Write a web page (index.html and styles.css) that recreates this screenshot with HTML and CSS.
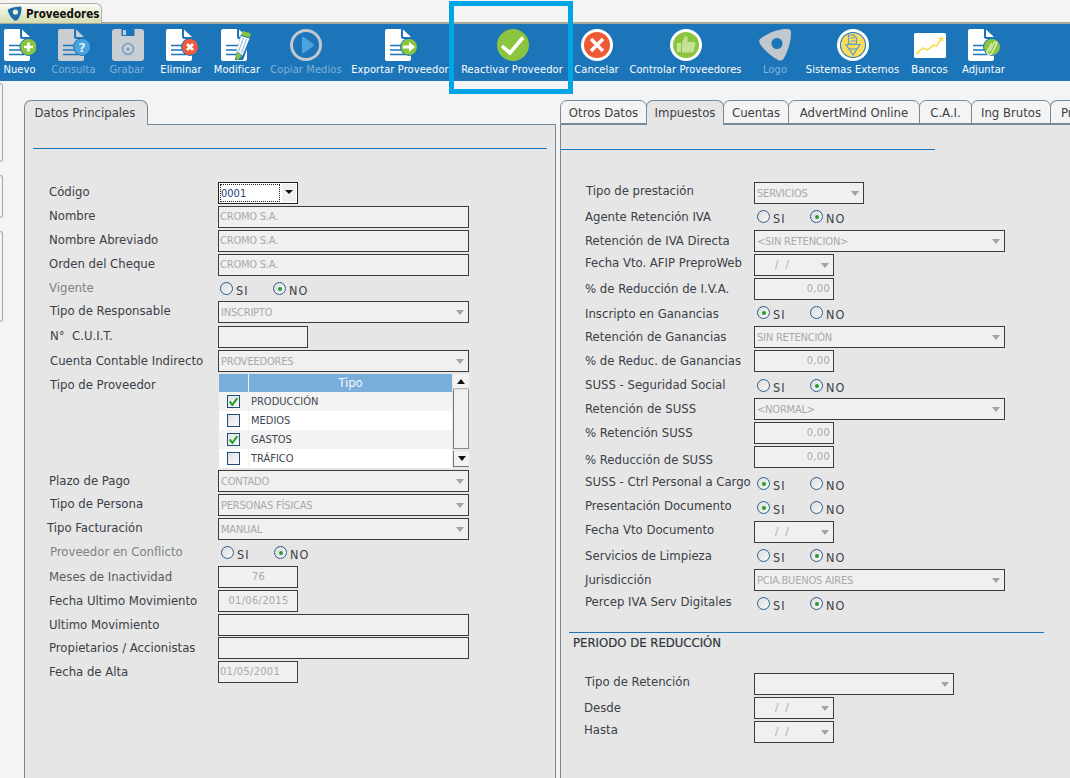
FILE: index.html
```html
<!DOCTYPE html>
<html lang="es">
<head>
<meta charset="utf-8">
<title>Proveedores</title>
<link rel="stylesheet" href="styles.css">
</head>
<body>
<svg class="defs" width="0" height="0" aria-hidden="true">
  <symbol id="page" viewBox="0 0 26 32">
    <path d="M2 0H16V8a2 2 0 0 0 2 2H26V30a2 2 0 0 1-2 2H2a2 2 0 0 1-2-2V2a2 2 0 0 1 2-2Z" fill="currentColor"/>
    <path d="M18 0.5L26 8H19a1 1 0 0 1-1-1Z" fill="currentColor"/>
    <path d="M5 16.5H20M5 21H18M5 25.500H20" stroke="#1c75b9" stroke-width="1.600" fill="none"/>
  </symbol>
</svg>
<div class="topbar">
  <div class="apptab">
    <svg class="applogo" viewBox="0 0 16 16"><path d="M1.500 3.500C5 1.500 10 .5 14 .5c1.500 0 1.500 1 1.500 2C15.500 7 14 12 11 15c-1 1-2 1-3 .4C5 13.500 2.500 9.500 1 5.500.7 4.500.7 4 1.500 3.500Z" fill="#1d6ea8"/><circle cx="9" cy="6.500" r="2.800" fill="#e8f0dc"/></svg>
    <span>Proveedores</span>
  </div>
</div>

<nav class="toolbar">
  <div class="tool t-nuevo">
    <svg class="ico" viewBox="0 0 32 32"><use href="#page" x="0" y="0" width="26" height="32" class="white"/><circle cx="24.500" cy="18" r="9" fill="#1c75b9"/><circle cx="24.500" cy="18" r="8" fill="#8bc53f"/><path d="M24.500 13.500v9M20 18h9" stroke="#fff" stroke-width="2.600"/></svg>
    <span>Nuevo</span>
  </div>
  <div class="tool off t-consulta">
    <svg class="ico" viewBox="0 0 32 32"><use href="#page" width="26" height="32" class="grey"/><circle cx="24" cy="18" r="9" fill="#1c75b9"/><circle cx="24" cy="18" r="8" fill="#4aa3df"/><text x="24" y="22.500" class="qm">?</text></svg>
    <span>Consulta</span>
  </div>
  <div class="tool off t-grabar nudge">
    <svg class="ico" viewBox="0 0 32 32"><path d="M3 0H29a3 3 0 0 1 3 3V29a3 3 0 0 1-3 3H3a3 3 0 0 1-3-3V3a3 3 0 0 1 3-3Z" fill="#c9ced3"/><path d="M9.500 0h13v7h-13Z" fill="#1c75b9"/><path d="M11 1h3v5h-3Z" fill="#c9ced3"/><path d="M5 11.500h22V32H5Z" fill="#c9ced3"/><circle cx="16" cy="20" r="5.500" fill="none" stroke="#6f9fc6" stroke-width="1.500"/><circle cx="16" cy="20" r="1.500" fill="#6f9fc6"/></svg>
    <span>Grabar</span>
  </div>
  <div class="tool t-eliminar nudge">
    <svg class="ico" viewBox="0 0 32 32"><use href="#page" width="26" height="32" class="white"/><circle cx="24" cy="18" r="9" fill="#1c75b9"/><circle cx="24" cy="18" r="8" fill="#ef5a3c"/><path d="M21 15l6 6M27 15l-6 6" stroke="#fff" stroke-width="2.600"/></svg>
    <span>Eliminar</span>
  </div>
  <div class="tool t-modificar">
    <svg class="ico" viewBox="0 0 32 32"><use href="#page" width="26" height="32" class="white"/><path d="M14 30L20 5 30.500 8 22 31l-8 0Z" fill="#1c75b9"/><path d="M21.500 2l8.500 2.500-1.300 4L20.300 6Z" fill="#8bc53f"/><path d="M20 7l8.500 2.500-7 17L15.500 22Z" fill="#fff"/><path d="M22.500 9l-5 13.500M25.500 10l-5 14" stroke="#9ac0de" stroke-width="1.200"/><path d="M15.500 22.500l5.500 4.500-6 5Z" fill="#8bc53f"/></svg>
    <span>Modificar</span>
  </div>
  <div class="tool off t-copiar">
    <svg class="ico" viewBox="0 0 32 32"><circle cx="16" cy="16" r="14.500" fill="none" stroke="#c2c8cd" stroke-width="3"/><path d="M12 8.500a1 1 0 0 1 1.500-.8L23.500 15a1.200 1.200 0 0 1 0 2L13.500 24.300a1 1 0 0 1-1.500-.8Z" fill="#4aa3df"/></svg>
    <span>Copiar Medios</span>
  </div>
  <div class="tool t-exportar nudge">
    <svg class="ico" viewBox="0 0 32 32"><use href="#page" width="26" height="32" class="white"/><circle cx="24" cy="18" r="9" fill="#1c75b9"/><circle cx="24" cy="18" r="8" fill="#8bc53f"/><path d="M18 16.500h6V13l6 5-6 5v-3.500h-6Z" fill="#fff"/></svg>
    <span>Exportar Proveedor</span>
  </div>
  <div class="tool t-reactivar nudge">
    <svg class="ico" viewBox="0 0 32 32"><circle cx="16" cy="16" r="16" fill="#8bc53f"/><path d="M5 17l8 7L26 8.500" fill="none" stroke="#fff" stroke-width="3.600"/></svg>
    <span>Reactivar Proveedor</span>
  </div>
  <div class="tool t-cancelar">
    <svg class="ico" viewBox="0 0 32 32"><circle cx="16" cy="16" r="16" fill="#fff"/><circle cx="16" cy="16" r="13" fill="#ef5a34"/><path d="M10 10l12 12M22 10L10 22" stroke="#fff" stroke-width="3.400"/></svg>
    <span>Cancelar</span>
  </div>
  <div class="tool t-controlar">
    <svg class="ico" viewBox="0 0 32 32"><circle cx="16" cy="16" r="16" fill="#fff"/><circle cx="16" cy="16" r="13" fill="#8bc53f"/><path d="M7 14h4v9H7ZM12 14l3-7c2.500 0 3 2 2.500 6H24c1 0 1.500 1 1.200 2l-1.500 7c-.2 1-1 1.500-2 1.500H12Z" fill="#c4e294"/></svg>
    <span>Controlar Proveedores</span>
  </div>
  <div class="tool off t-logo">
    <svg class="ico" viewBox="0 0 32 32"><path d="M1 10C10 3 20 0 28 0c3 0 4 1 4 4 0 8-3 18-7 25-2 3-4 3-6 2C12 27 5 21 1 15c-1-2-1-4 0-5Z" fill="#c2c8cd"/><circle cx="18" cy="14.500" r="5.500" fill="#1c75b9"/></svg>
    <span>Logo</span>
  </div>
  <div class="tool t-sistemas">
    <svg class="ico" viewBox="0 0 32 32"><circle cx="16" cy="16" r="16" fill="#fff"/><circle cx="16" cy="16" r="13" fill="#1c75b9"/><circle cx="16" cy="16" r="12" fill="#fbdc5b"/><path d="M11.500 6h5l3 3v6h-8ZM13.500 9h4M13.500 12h5" fill="none" stroke="#5a9fc8" stroke-width="1.200"/><path d="M9 15.500h14L16 26Z" fill="none" stroke="#5a9fc8" stroke-width="1.200"/><path d="M12 20h8" stroke="#5a9fc8" stroke-width="1.200"/></svg>
    <span>Sistemas Externos</span>
  </div>
  <div class="tool t-bancos">
    <svg class="ico" viewBox="0 0 32 32"><rect x="0" y="4" width="32" height="25" rx="1.500" fill="#fff"/><path d="M2.500 25l6-6 5 2 6-5 3 1 4.500-7" fill="none" stroke="#fbdc5b" stroke-width="1.800"/><path d="M24 9.500l5-2 .5 5.500Z" fill="#fbdc5b"/></svg>
    <span>Bancos</span>
  </div>
  <div class="tool t-adjuntar">
    <svg class="ico" viewBox="0 0 32 32"><use href="#page" width="26" height="32" class="white"/><circle cx="24" cy="18" r="9" fill="#1c75b9"/><circle cx="24" cy="18" r="8" fill="#8bc53f"/><path d="M21.500 22.500l4.500-8.500c1-2 3.500-.7 2.500 1.200l-4.700 9c-1.700 3-6 1-4.400-2l4.300-8" fill="none" stroke="#dff0c0" stroke-width="1.400"/></svg>
    <span>Adjuntar</span>
  </div>
</nav>

<div class="highlight"></div>

<main class="workspace">
  <div class="stubs">
    <div class="stub s1"></div>
    <div class="stub s2"></div>
    <div class="stub s3"></div>
  </div>

  <section class="pane pane-left">
    <div class="tabs">
      <div class="tab active w-datos">Datos Principales</div>
    </div>
    <div class="panel">
      <hr class="rule rule-left">
      <div class="form form-left">
        <div class="row">
          <label class="lbl p1">Código</label>
          <div class="combo"><span class="focus">0001</span><span class="dropbtn"></span></div>
        </div>
        <div class="row"><label class="lbl p1">Nombre</label><div class="field w251">CROMO S.A.</div></div>
        <div class="row"><label class="lbl p1">Nombre Abreviado</label><div class="field w251">CROMO S.A.</div></div>
        <div class="row"><label class="lbl p1">Orden del Cheque</label><div class="field w251">CROMO S.A.</div></div>
        <div class="row h23"><label class="lbl p1 dim">Vigente</label>
          <div class="radios r4 rx2"><span class="rad"><i></i>SI</span><span class="rad on"><i></i>NO</span></div></div>
        <div class="row h25"><label class="lbl p1 x1">Tipo de Responsable</label><div class="field sel w251">INSCRIPTO</div></div>
        <div class="row"><label class="lbl p1 x1">N°&nbsp; C.U.I.T.</label><div class="field w90"></div></div>
        <div class="row h23"><label class="lbl p2 x1">Cuenta Contable Indirecto</label><div class="field sel w251">PROVEEDORES</div></div>
        <div class="row h97"><label class="lbl p3 x1">Tipo de Proveedor</label>
          <div class="picker">
            <div class="grid">
              <div class="ghead"><span class="gc"></span><span class="gt">Tipo</span></div>
              <div class="grow"><span class="gc"><b class="chk on"><svg viewBox="0 0 10 10"><path d="M1.500 5l2.500 3 4.500-6" fill="none" stroke="#1fa02c" stroke-width="1.800"/></svg></b></span><span class="gv">PRODUCCIÓN</span></div>
              <div class="grow alt"><span class="gc"><b class="chk"></b></span><span class="gv">MEDIOS</span></div>
              <div class="grow"><span class="gc"><b class="chk on"><svg viewBox="0 0 10 10"><path d="M1.500 5l2.500 3 4.500-6" fill="none" stroke="#1fa02c" stroke-width="1.800"/></svg></b></span><span class="gv">GASTOS</span></div>
              <div class="grow alt"><span class="gc"><b class="chk"></b></span><span class="gv">TRÁFICO</span></div>
            </div>
            <div class="sbar"><span class="sbtn up"></span><span class="thumb"></span><span class="sbtn down"></span></div>
          </div>
        </div>
        <div class="row"><label class="lbl p2">Plazo de Pago</label><div class="field sel w251">CONTADO</div></div>
        <div class="row"><label class="lbl p1 x1">Tipo de Persona</label><div class="field sel w251">PERSONAS FÍSICAS</div></div>
        <div class="row"><label class="lbl p1 xm2">Tipo Facturación</label><div class="field sel w251">MANUAL</div></div>
        <div class="row"><label class="lbl p1 x1 dim">Proveedor en Conflicto</label>
          <div class="radios r4 rx3"><span class="rad"><i></i>SI</span><span class="rad on"><i></i>NO</span></div></div>
        <div class="row"><label class="lbl p2 mid">Meses de Inactividad</label><div class="field w80 center">76</div></div>
        <div class="row"><label class="lbl p2">Fecha Ultimo Movimiento</label><div class="field w80 center">01/06/2015</div></div>
        <div class="row h23"><label class="lbl p2">Ultimo Movimiento</label><div class="field w251"></div></div>
        <div class="row"><label class="lbl p2">Propietarios / Accionistas</label><div class="field w251"></div></div>
        <div class="row"><label class="lbl p2">Fecha de Alta</label><div class="field w80">01/05/2001</div></div>
      </div>
    </div>
  </section>

  <section class="pane pane-right">
    <div class="tabs">
      <div class="tab w-otros">Otros Datos</div>
      <div class="tab active w-imp">Impuestos</div>
      <div class="tab w-cuentas">Cuentas</div>
      <div class="tab w-advert">AdvertMind Online</div>
      <div class="tab w-cai">C.A.I.</div>
      <div class="tab w-ing">Ing Brutos</div>
      <div class="tab w-pr">Pr</div>
    </div>
    <div class="panel">
      <hr class="rule rule-right">
      <div class="form form-right">
        <div class="row"><label class="lbl p0 x1">Tipo de prestación</label><div class="field sel w110">SERVICIOS</div></div>
        <div class="row"><label class="lbl p2">Agente Retención IVA</label><div class="radios r4 rx3"><span class="rad"><i></i>SI</span><span class="rad on"><i></i>NO</span></div></div>
        <div class="row"><label class="lbl p2">Retención de IVA Directa</label><div class="field sel w251">&lt;SIN RETENCION&gt;</div></div>
        <div class="row"><label class="lbl p0">Fecha Vto. AFIP PreproWeb</label><div class="field sel w80 date">/&nbsp;&nbsp;/</div></div>
        <div class="row"><label class="lbl p2">% de Reducción de I.V.A.</label><div class="field w80 num">0,00</div></div>
        <div class="row"><label class="lbl p3">Inscripto en Ganancias</label><div class="radios r4 rx3"><span class="rad on"><i></i>SI</span><span class="rad"><i></i>NO</span></div></div>
        <div class="row"><label class="lbl p2">Retención de Ganancias</label><div class="field sel w251">SIN RETENCIÓN</div></div>
        <div class="row"><label class="lbl p2">% de Reduc. de Ganancias</label><div class="field w80 num">0,00</div></div>
        <div class="row"><label class="lbl p2">SUSS - Seguridad Social</label><div class="radios r5 rx3"><span class="rad"><i></i>SI</span><span class="rad on"><i></i>NO</span></div></div>
        <div class="row"><label class="lbl p2">Retención de SUSS</label><div class="field sel w251">&lt;NORMAL&gt;</div></div>
        <div class="row"><label class="lbl p2">% Retención SUSS</label><div class="field w80 num">0,00</div></div>
        <div class="row"><label class="lbl p5">% Reducción de SUSS</label><div class="field w80 num">0,00</div></div>
        <div class="row"><label class="lbl p3">SUSS - Ctrl Personal a Cargo</label><div class="radios r7 rx3"><span class="rad on"><i></i>SI</span><span class="rad"><i></i>NO</span></div></div>
        <div class="row h27"><label class="lbl p3">Presentación Documento</label><div class="radios r7 rx3"><span class="rad on"><i></i>SI</span><span class="rad"><i></i>NO</span></div></div>
        <div class="row"><label class="lbl p0">Fecha Vto Documento</label><div class="field sel w80 date">/&nbsp;&nbsp;/</div></div>
        <div class="row"><label class="lbl p2">Servicios de Limpieza</label><div class="radios r4 rx3"><span class="rad"><i></i>SI</span><span class="rad on"><i></i>NO</span></div></div>
        <div class="row"><label class="lbl p2">Jurisdicción</label><div class="field sel w251">PCIA.BUENOS AIRES</div></div>
        <div class="row"><label class="lbl p0">Percep IVA Serv Digitales</label><div class="radios r4 rx3"><span class="rad"><i></i>SI</span><span class="rad on"><i></i>NO</span></div></div>
      </div>
      <div class="section">
        <hr class="rule rule-section">
        <h2 class="section-title">PERIODO DE REDUCCIÓN</h2>
        <div class="form form-right form-section">
          <div class="row"><label class="lbl p0">Tipo de Retención</label><div class="field sel w200"></div></div>
          <div class="row"><label class="lbl p2 xm1">Desde</label><div class="field sel w80 date">/&nbsp;&nbsp;/</div></div>
          <div class="row"><label class="lbl p0 xm1">Hasta</label><div class="field sel w80 date">/&nbsp;&nbsp;/</div></div>
        </div>
      </div>
    </div>
  </section>
</main>
</body>
</html>
```
FILE: styles.css
```css
* { box-sizing: border-box; }
html, body { margin: 0; padding: 0; }
body {
  width: 1070px;
  height: 778px;
  overflow: hidden;
  position: relative;
  background: #f4f4f4;
  font-family: "DejaVu Sans Condensed", "DejaVu Sans", sans-serif;
  font-size: 13px;
  color: #33393f;
}
.defs { position: absolute; }
.white { color: #fff; }
.grey { color: #c9ced3; }

/* top bar */
.topbar {
  height: 24px;
  padding-top: 3px;
  border-bottom: 2px solid #a5a89a;
}
.apptab {
  width: 102px;
  height: 20px;
  display: flex;
  align-items: center;
  gap: 4px;
  padding-left: 7px;
  border: 1px solid #b0b0a8;
  border-bottom: 0;
  border-left: 0;
  border-radius: 0 6px 0 0;
  background: linear-gradient(#fbfbf6, #d4dcae);
  font-weight: bold;
  font-size: 11.500px;
  color: #111;
}
.applogo { width: 15px; height: 15px; flex: none; }

/* toolbar */
.toolbar {
  height: 57px;
  display: flex;
  align-items: flex-start;
  background: #1c75b9;
  color: #fff;
  padding-top: 5px;
  font-size: 11px;
  letter-spacing: 0.1px;
}
.tool {
  display: flex;
  flex-direction: column;
  align-items: center;
  flex: none;
}
.tool span {
  margin-top: 2px;
  line-height: 14px;
  white-space: nowrap;
}
.tool.off span { color: #7fb2d9; }
.ico { width: 32px; height: 32px; display: block; }
.nudge .ico { margin-left: 2px; }
.qm { font: bold 13px "DejaVu Sans", sans-serif; fill: #dcecf7; text-anchor: middle; }
.t-nuevo { width: 31px; margin-left: 4px; }
.t-consulta { width: 43px; margin-left: 17px; }
.t-grabar { width: 34px; margin-left: 15px; }
.t-eliminar { width: 38px; margin-left: 18px; }
.t-modificar { width: 46px; margin-left: 14px; }
.t-copiar { width: 70px; margin-left: 11px; }
.t-exportar { width: 98px; margin-left: 10px; }
.t-reactivar { width: 102px; margin-left: 12px; }
.t-cancelar { width: 43px; margin-left: 12px; }
.t-controlar { width: 113px; margin-left: 11px; }
.t-logo { width: 24px; margin-left: 21px; }
.t-sistemas { width: 91px; margin-left: 20px; }
.t-bancos { width: 35px; margin-left: 14px; }
.t-adjuntar { width: 43px; margin-left: 15px; }

/* highlight overlay */
.highlight {
  position: absolute;
  left: 449px;
  top: 1px;
  width: 124px;
  height: 93px;
  border: 5px solid #00a5e6;
}

/* workspace */
.workspace {
  display: flex;
  height: 697px;
}
.stubs {
  flex: 0 0 3px;
  display: flex;
  flex-direction: column;
  gap: 13px;
  padding-top: 2px;
}
.stub {
  border: 1px solid #a8a8a8;
  border-left: 0;
  border-radius: 0 3px 3px 0;
}
.s1 { height: 79px; }
.s2 { height: 43px; }
.s3 { height: 91px; }
.pane {
  padding-top: 19px;
  display: flex;
  flex-direction: column;
  min-width: 0;
}
.pane-left { width: 532px; margin-left: 21px; }
.pane-right { width: 510px; margin-left: 4px; }

/* tabs */
.tabs {
  display: flex;
  height: 25px;
  overflow: hidden;
  position: relative;
  z-index: 1;
  margin-bottom: -1px;
  flex: none;
}
.tab {
  flex: none;
  height: 24px;
  border: 1px solid #74899a;
  border-radius: 7px 7px 0 0;
  background: #f4f4f4;
  margin-right: -1px;
  text-align: center;
  line-height: 24px;
  white-space: nowrap;
  color: #3a4046;
  overflow: hidden;
}
.tab.active {
  height: 25px;
  background: #e6e6e6;
  border-bottom: 0;
}
.w-datos { width: 124px; padding-right: 2px; }
.w-otros { width: 87px; }
.w-imp { width: 78px; }
.w-cuentas { width: 66px; }
.w-advert { width: 132px; }
.w-cai { width: 53px; }
.w-ing { width: 80px; }
.w-pr { width: 20px; text-align: left; padding-left: 10px; border-right: 0; border-radius: 7px 0 0 0; }

.panel {
  flex: 1;
  background: #e6e6e6;
  border: 1px solid #74899a;
  border-bottom: 0;
}
.pane-right .panel { border-right: 0; }

.rule {
  border: 0;
  height: 1px;
  margin: 0;
  background: #1c75b9;
}
.rule-left { margin: 23px 8px 0 8px; }
.rule-right { margin: 24px 0 0 0; width: 374px; }

/* form */
.form-left { margin-top: 33px; padding-left: 24px; }
.form-right { margin-top: 32px; padding-left: 24px; }
.row {
  display: flex;
  height: 24px;
  align-items: flex-start;
}
.h23 { height: 23px; }
.h25 { height: 25px; }
.h27 { height: 27px; }
.h97 { height: 97px; }
.lbl {
  flex: 0 0 169px;
  line-height: 17px;
  white-space: nowrap;
  color: #3a4046;
}
.dim { color: #7d8287; }
.mid { color: #565b60; }
.p0 { padding-top: 0; }
.p1 { padding-top: 1px; }
.p2 { padding-top: 2px; }
.p3 { padding-top: 3px; }
.p4 { padding-top: 4px; }
.p5 { padding-top: 5px; }
.x1 { margin-left: 1px; flex-basis: 168px; }
.xm1 { margin-left: -1px; flex-basis: 170px; }
.xm2 { margin-left: -2px; flex-basis: 171px; }

.field {
  height: 22px;
  border: 1px solid #3c3c3c;
  background: #f0f0f0;
  color: #a9a9a9;
  font-size: 11px;
  letter-spacing: -0.2px;
  line-height: 20px;
  padding-left: 1px;
  position: relative;
  white-space: nowrap;
}
.w80 { width: 80px; letter-spacing: 0.3px; }
.w90 { width: 90px; }
.w110 { width: 110px; }
.w200 { width: 200px; }
.w251 { width: 251px; }
.sel { padding-left: 2px; line-height: 22px; }
.sel::after {
  content: "";
  position: absolute;
  right: 4px;
  top: 8px;
  border-left: 4px solid transparent;
  border-right: 4px solid transparent;
  border-top: 5px solid #a2a2a2;
}
.center { text-align: center; }
.num { text-align: right; padding-right: 3px; }
.date { padding-left: 20px; line-height: 20px; }

.combo {
  width: 80px;
  height: 22px;
  border: 1px solid #222;
  background: #fff;
  display: flex;
  padding: 1px;
  font-size: 11px;
  color: #24467a;
}
.focus {
  width: 60px;
  border: 1px dotted #222;
  line-height: 18px;
}
.dropbtn {
  flex: 1;
  margin-left: 2px;
  background: #f0f0f0;
  position: relative;
}
.dropbtn::after {
  content: "";
  position: absolute;
  left: 3px;
  top: 6px;
  border-left: 4px solid transparent;
  border-right: 4px solid transparent;
  border-top: 4px solid #111;
}

/* radios */
.radios { display: flex; }
.r4 { padding-top: 4px; }
.r5 { padding-top: 5px; }
.r7 { padding-top: 7px; }
.rx2 { padding-left: 2px; }
.rx3 { padding-left: 3px; }
.rad {
  width: 53px;
  display: flex;
  align-items: flex-start;
  font-size: 12.500px;
  line-height: 17px;
  letter-spacing: 1px;
  color: #3a4046;
}
.rad i {
  width: 13px;
  height: 13px;
  flex: none;
  margin-right: 3px;
  border: 1px solid #2a5c8c;
  border-radius: 50%;
  background: linear-gradient(135deg, #dcdcdc, #f8f8f8);
  display: flex;
  align-items: center;
  justify-content: center;
}
.rad.on i::after {
  content: "";
  width: 4px;
  height: 4px;
  border-radius: 50%;
  background: #1fa02c;
}

/* picker grid */
.picker {
  width: 251px;
  height: 94px;
  display: flex;
  padding-left: 1px;
}
.grid { width: 233px; }
.ghead {
  height: 18px;
  margin-top: 1px;
  display: flex;
  background: #79aedb;
  color: #f4f8fc;
  line-height: 18px;
}
.gc {
  flex: 0 0 30px;
  border-right: 1px solid #f2f2f2;
  display: flex;
  align-items: center;
  justify-content: center;
}
.gt { flex: 1; text-align: center; }
.grow {
  height: 19px;
  display: flex;
  background: #f3f3f3;
  font-size: 11px;
  line-height: 20px;
  color: #3e4650;
}
.grow.alt { background: #fff; }
.gv { padding-left: 2px; }
.chk {
  width: 13px;
  height: 13px;
  border: 1px solid #1f4e79;
  background: linear-gradient(135deg, #e2e2e2, #fafafa);
  display: block;
}
.chk svg { display: block; width: 11px; height: 11px; }
.sbar {
  flex: 1;
  display: flex;
  flex-direction: column;
  padding-top: 1px;
  margin-left: 1px;
}
.sbtn {
  height: 15px;
  background: #f2f2f2;
  border-bottom: 1px solid #bbb;
  position: relative;
}
.sbtn::after {
  content: "";
  position: absolute;
  left: 4px;
  top: 5px;
  border-left: 4px solid transparent;
  border-right: 4px solid transparent;
}
.up::after { border-bottom: 5px solid #111; }
.down { height: 16px; border-left: 1px solid #777; border-bottom: 1px solid #777; margin-top: 2px; }
.down::after { border-top: 5px solid #111; }
.thumb {
  height: 60px;
  background: #f0f0f0;
  border: 1px solid #8a8a8a;
  border-top-color: #ddd;
  border-left-color: #777;
}

/* section */
.section { margin-top: 15px; }
.rule-section { margin-left: 8px; width: 475px; }
.section-title {
  margin: 0;
  padding: 1px 0 0 12px;
  font-size: 13px;
  font-weight: normal;
  line-height: 18px;
  color: #2f353a;
  -webkit-text-stroke: 0.2px #2f353a;
}
.form-section { margin-top: 21px; }
```
